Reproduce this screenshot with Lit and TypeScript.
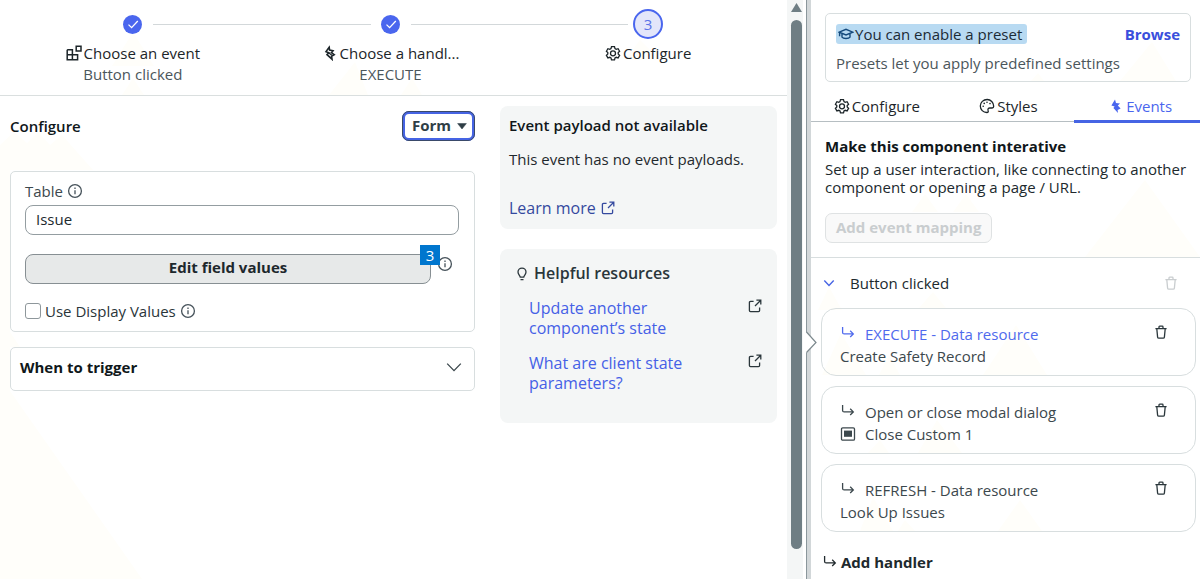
import { LitElement, html, css, svg, nothing } from "lit";
import { customElement, property, state } from "lit/decorators.js";
import { classMap } from "lit/directives/class-map.js";

const glyphs: Record<string, unknown> = {
  check: svg`<path d="M3.500 8.600 6.600 11.600 12.800 5"/>`,
  blocks: svg`<path d="M1.200 4.700h5.200v10M1.200 4.700v10h10.400v-5H1.200M10.200 1.200h4.800v4.800h-4.800z" stroke-width="1.500"/>`,
  bolt: svg`<path d="M7.200 2.200 4 6.600l2.600 1.200L5 9.600l5 4.600-.4-3L12.200 9.600 9.400 7.600 11 5.800 7.600 5z" stroke-width="1.600"/><path d="M6.400 7.500 9.800 10.200" stroke-width="1.200"/>`,
  boltFill: svg`<path d="M7 1.400 3.400 7.400 6.600 8.400 5.400 10 10 15 9.600 12 12.600 10.400 9.800 7.600 12 5.400 8 5z" fill="currentColor" stroke="none"/>`,
  gear: svg`<path d="M6.500 1.700h3l.5 1.900 1.200.7 1.900-.6 1.500 2.600-1.400 1.300v1.400l1.400 1.300-1.500 2.600-1.900-.6-1.200.7-.5 1.900h-3L6 13l-1.200-.7-1.900.6-1.500-2.600L2.800 9V7.600L1.400 6.300l1.500-2.600 1.900.6L6 3.600z"/><circle cx="8" cy="8.300" r="2.500"/>`,
  palette: svg`<path d="M8.200 1.500C4.300 1.500 1.300 4.400 1.300 8s2.900 6.500 6.500 6.500c1.500 0 1.700-1 1.300-2-.5-1.400.3-2.500 1.700-2.500h2.300c1.100 0 1.600-.7 1.600-1.700-.1-3.900-2.900-6.800-6.500-6.800z"/><path d="M4.200 8.200h.01M5.200 5.400h.01M8 4.200h.01M11 5.600h.01" stroke-width="1.600" stroke-linecap="round"/>`,
  cap: svg`<path d="M1.200 6.200 8 3.300l6.800 2.900L8 8.900z M4 7.500v3.700c1.200 1.700 6.800 1.700 8 0V7.500M1.600 6.400v3.800" stroke-width="1.400"/>`,
  info: svg`<circle cx="8" cy="8" r="6.400"/><path d="M8 7.200v4M8 4.600v1.400" stroke-width="1.300"/>`,
  external: svg`<path d="M6.600 3.400H3.500c-.8 0-1.100.3-1.100 1.100v8c0 .8.300 1.100 1.100 1.100h8c.8 0 1.100-.3 1.100-1.100V9.400M9.400 2.200h4.400v4.400M13.500 2.500 8 8" stroke-width="1.300"/>`,
  bulb: svg`<path d="M6.300 11.200C6.300 9.600 4 8.700 4 6.100a4 4 0 0 1 8 0c0 2.600-2.300 3.500-2.300 5.100z M6.500 13.700h3" stroke-width="1.300"/>`,
  chevron: svg`<path d="M1.200 4.600 8 11.600l6.800-7" stroke-width="1.300"/>`,
  smallChevron: svg`<path d="M3.300 5.600 8 10.400l4.700-4.800" stroke-width="1.400"/>`,
  trash: svg`<path d="M2.400 4.600h11.200M3.800 4.800l.8 8.300c.1.800.4 1.100 1.200 1.100h4.400c.8 0 1.100-.3 1.200-1.100l.8-8.300M6 4.400V2.900c0-.5.200-.7.700-.7h2.600c.5 0 .7.200.7.700v1.500" stroke-width="1.300"/>`,
  branch: svg`<path d="M2.600 2v5.400c0 1.100.4 1.500 1.500 1.500h9M10.200 5.800l3.100 3.100-3.100 3.100" stroke-width="1.300"/>`,
  modal: svg`<rect x="1.500" y="1.800" width="13" height="12.400" rx="1.200"/><rect x="4" y="4.600" width="8" height="6.200" fill="currentColor" stroke="none"/>`,
  caret: svg`<path d="M3 5.200h10L8 11.400z" fill="currentColor" stroke="currentColor" stroke-width=".6"/>`,
};

@customElement("ui-icon")
class UiIcon extends LitElement {
  @property() name = "";

  static styles = css`
    :host {
      display: inline-flex;
      flex: none;
      width: 16px;
      height: 16px;
    }
    .glyph {
      width: 100%;
      height: 100%;
      fill: none;
      stroke: currentColor;
      stroke-width: 1.3;
    }
  `;

  render() {
    return html`<svg class="glyph" viewBox="0 0 16 16" aria-hidden="true">${glyphs[this.name] ?? nothing}</svg>`;
  }
}

const shared = css`
  * {
    box-sizing: border-box;
  }
  h2,
  h3,
  p,
  ul,
  ol {
    margin: 0;
    padding: 0;
    list-style: none;
  }
  button,
  input,
  select {
    font: inherit;
    color: inherit;
    margin: 0;
  }
  a {
    text-decoration: none;
  }
`;

interface Step {
  icon: string;
  label: string;
  value?: string;
}

@customElement("step-bar")
class StepBar extends LitElement {
  static styles = [
    shared,
    css`
      :host {
        display: block;
        border-bottom: 1px solid #dadfdf;
      }
      .steps {
        display: grid;
        grid-template-columns: repeat(3, minmax(0, 1fr));
        padding: 9px 10px 10px 4px;
      }
      .track {
        display: flex;
        align-items: center;
        height: 30px;
      }
      .line {
        flex: 1;
        height: 1px;
        background: #d3d8da;
      }
      .line.none {
        background: transparent;
      }
      .slot {
        display: flex;
        justify-content: center;
        width: 40px;
      }
      .marker {
        display: flex;
        align-items: center;
        justify-content: center;
        width: 19px;
        height: 19px;
        border-radius: 50%;
        background: #4a66ee;
        color: #fff;
      }
      .marker.current {
        width: 30px;
        height: 30px;
        border: 2px solid #4a66ee;
        background: #e3e6fa;
        color: #5a73e8;
      }
      .label {
        display: flex;
        align-items: center;
        justify-content: center;
        gap: 2px;
        line-height: 22px;
        padding-top: 3px;
        color: #1c2529;
      }
      .value {
        text-align: center;
        line-height: 21px;
        color: #4b565b;
      }
    `,
  ];

  steps: Step[] = [
    { icon: "blocks", label: "Choose an event", value: "Button clicked" },
    { icon: "bolt", label: "Choose a handl...", value: "EXECUTE" },
    { icon: "gear", label: "Configure" },
  ];

  render() {
    const last = this.steps.length - 1;
    return html`<ol class="steps">
      ${this.steps.map(
        (s, i) => html`<li>
          <div class="track">
            <span class=${classMap({ line: true, none: i === 0 })}></span>
            <span class="slot">
              <span class=${classMap({ marker: true, current: i === last })}
                >${i === last ? i + 1 : html`<ui-icon name="check"></ui-icon>`}</span
              >
            </span>
            <span class=${classMap({ line: true, none: i === last })}></span>
          </div>
          <div class="label"><ui-icon name=${s.icon}></ui-icon>${s.label}</div>
          ${s.value ? html`<div class="value">${s.value}</div>` : nothing}
        </li>`
      )}
    </ol>`;
  }
}

@customElement("config-form")
class ConfigForm extends LitElement {
  @state() private useDisplay = false;

  static styles = [
    shared,
    css`
      :host {
        display: block;
      }
      .head {
        display: flex;
        align-items: center;
        justify-content: space-between;
        height: 30px;
        margin-top: 5px;
      }
      .title {
        font-size: 15px;
        font-weight: 600;
        color: #10171a;
      }
      .mode {
        display: grid;
        align-items: center;
      }
      .mode select,
      .mode ui-icon {
        grid-area: 1 / 1;
      }
      .mode select {
        appearance: none;
        height: 30px;
        padding: 0 20px 2px 7px;
        border: 3px solid #4664e4;
        outline: 1px solid #3a4a6a;
        outline-offset: -1px;
        border-radius: 7px;
        background: #fff;
        font-weight: 700;
        line-height: 20px;
        color: #2f3e46;
      }
      .mode ui-icon {
        justify-self: end;
        width: 14px;
        margin-right: 6px;
        color: #2f3e46;
        pointer-events: none;
      }
      .card {
        border: 1px solid #d8dedf;
        border-radius: 5px;
        background: #fff;
      }
      .fields {
        margin-top: 30px;
        padding: 9px 15px 9px 14px;
      }
      .caption {
        display: flex;
        align-items: center;
        gap: 4px;
        line-height: 20px;
        color: #3c484d;
      }
      ui-icon.info {
        color: #46525a;
      }
      .text {
        display: block;
        width: 100%;
        height: 30px;
        margin-top: 4px;
        padding: 0 10px 2px;
        border: 1px solid #949da1;
        border-radius: 8px;
        background: #fff;
        color: #20292d;
      }
      .action {
        display: flex;
        align-items: center;
        gap: 6px;
        margin-top: 19px;
      }
      .edit-wrap {
        position: relative;
        flex: 1;
      }
      .edit {
        width: 100%;
        height: 30px;
        border: 1px solid #878f93;
        border-radius: 8px;
        background: #e7e9e9;
        font-weight: 700;
        line-height: 20px;
        padding: 0 0 4px;
        color: #1d272c;
      }
      .badge {
        position: absolute;
        top: -9px;
        right: -9px;
        width: 20px;
        height: 20px;
        line-height: 20px;
        text-align: center;
        background: #0076ce;
        color: #fff;
      }
      .action ui-icon {
        margin: 0 6px 10px 0;
      }
      .check {
        display: flex;
        align-items: center;
        gap: 4px;
        margin-top: 16px;
        line-height: 22px;
        color: #2a353a;
      }
      .check input {
        appearance: none;
        width: 16px;
        height: 16px;
        border: 1px solid #8e979b;
        border-radius: 3px;
        background: #fff;
      }
      .check input:checked {
        background: #4a66ee;
      }
      .trigger {
        display: flex;
        align-items: center;
        justify-content: space-between;
        width: 100%;
        height: 44px;
        margin-top: 15px;
        padding: 0 12px 4px 9px;
        font-weight: 700;
        color: #10171a;
      }
      .trigger ui-icon {
        color: #3a464b;
      }
    `,
  ];

  render() {
    return html`
      <div class="head">
        <h2 class="title">Configure</h2>
        <div class="mode">
          <select aria-label="Editing mode">
            <option>Form</option>
          </select>
          <ui-icon name="caret"></ui-icon>
        </div>
      </div>
      <section class="card fields">
        <div class="caption"><label for="table">Table</label><ui-icon class="info" name="info"></ui-icon></div>
        <input id="table" class="text" type="text" .value=${"Issue"} />
        <div class="action">
          <div class="edit-wrap">
            <button class="edit" type="button">Edit field values</button>
            <span class="badge">3</span>
          </div>
          <ui-icon class="info" name="info"></ui-icon>
        </div>
        <div class="check">
          <input
            id="display"
            type="checkbox"
            .checked=${this.useDisplay}
            @change=${(e: Event) => (this.useDisplay = (e.target as HTMLInputElement).checked)}
          />
          <label for="display">Use Display Values</label>
          <ui-icon class="info" name="info"></ui-icon>
        </div>
      </section>
      <button class="card trigger" type="button">When to trigger<ui-icon name="chevron"></ui-icon></button>
    `;
  }
}

@customElement("help-column")
class HelpColumn extends LitElement {
  static styles = [
    shared,
    css`
      :host {
        display: flex;
        flex-direction: column;
        gap: 20px;
      }
      .panel {
        border-radius: 8px;
        background: #f4f6f6;
        color: #1f292d;
      }
      .payload {
        padding: 8px 9px 10px;
      }
      .title {
        font-size: 15px;
        font-weight: 600;
        line-height: 22px;
        color: #10171a;
      }
      .note {
        margin-top: 12px;
        line-height: 22px;
      }
      .more {
        display: flex;
        align-items: center;
        gap: 4px;
        margin-top: 27px;
        font-size: 16px;
        line-height: 22px;
        color: #34499f;
      }
      .resources {
        padding: 13px 14px 30px;
      }
      .heading {
        display: flex;
        align-items: center;
        gap: 4px;
        font-size: 16px;
        font-weight: 600;
        line-height: 22px;
        color: #2a363b;
      }
      .links {
        display: flex;
        flex-direction: column;
        gap: 15px;
        padding: 14px 0 0 15px;
        font-size: 16px;
        line-height: 20px;
      }
      .links li {
        display: flex;
        justify-content: space-between;
      }
      .links a {
        max-width: 170px;
        color: #4560e6;
      }
      .heading ui-icon {
        margin-top: 2px;
      }
      .links ui-icon {
        color: #2a363b;
      }
    `,
  ];

  render() {
    return html`
      <section class="panel payload">
        <h3 class="title">Event payload not available</h3>
        <p class="note">This event has no event payloads.</p>
        <a class="more" href="#learn">Learn more <ui-icon name="external"></ui-icon></a>
      </section>
      <section class="panel resources">
        <h3 class="heading"><ui-icon name="bulb"></ui-icon>Helpful resources</h3>
        <ul class="links">
          <li><a href="#state">Update another component’s state</a><ui-icon name="external"></ui-icon></li>
          <li><a href="#parameters">What are client state parameters?</a><ui-icon name="external"></ui-icon></li>
        </ul>
      </section>
    `;
  }
}

interface Handler {
  name: string;
  detail: string;
  active?: boolean;
  modal?: boolean;
}

@customElement("events-panel")
class EventsPanel extends LitElement {
  static styles = [
    shared,
    css`
      :host {
        display: block;
        overflow: hidden;
      }
      button {
        border: 0;
        padding: 0;
        background: none;
      }
      .preset {
        margin: 13px 9px 0 14px;
        padding: 10px 10px 7px;
        border: 1px solid #d8dedf;
        border-radius: 5px;
      }
      .preset-head {
        display: flex;
        align-items: center;
        justify-content: space-between;
      }
      .pill {
        display: flex;
        align-items: center;
        gap: 1px;
        height: 20px;
        padding: 0 5px 0 2px;
        border-radius: 3px;
        background: #b8daf2;
        color: #1c2b36;
      }
      .pill ui-icon {
        color: #164a7c;
      }
      .browse {
        font-weight: 700;
        line-height: 20px;
        color: #3a4fdc;
      }
      .preset-note {
        margin-top: 8px;
        line-height: 22px;
        color: #4b565b;
      }
      .tabs {
        display: grid;
        grid-template-columns: repeat(3, calc(100% / 3 + 2px));
        height: 40px;
        border-bottom: 1px solid #b6bec2;
      }
      .tab {
        display: flex;
        align-items: center;
        justify-content: center;
        gap: 2px;
        height: 41px;
        padding-top: 9px;
        border-bottom: 3px solid transparent;
        color: #1c2529;
      }
      .tab.on {
        border-color: #4664e4;
        color: #4a66ee;
      }
      .intro {
        padding: 14px 8px 14px 14px;
        border-bottom: 1px solid #d8dedf;
      }
      .title {
        font-size: 15px;
        font-weight: 700;
        line-height: 20px;
        color: #10171a;
      }
      .desc {
        margin-top: 4px;
        line-height: 18px;
        color: #20292d;
      }
      .add-mapping {
        height: 30px;
        margin-top: 17px;
        padding: 0 10px 3px;
        border: 1px solid #dfe2e3;
        border-radius: 7px;
        background: #f9f9f9;
        font-weight: 700;
        color: #c9cdcf;
      }
      .event {
        display: flex;
        align-items: center;
        gap: 13px;
        height: 50px;
        padding: 0 21px 1px 10px;
        color: #20292d;
      }
      .event .toggle {
        display: flex;
        color: #4664e4;
      }
      .event .name {
        flex: 1;
      }
      .event .bin {
        display: flex;
        color: #c9cdcf;
      }
      .handlers {
        display: flex;
        flex-direction: column;
        gap: 10px;
        padding: 0 4px 0 10px;
      }
      .handler {
        display: grid;
        grid-template-columns: 16px 1fr 16px;
        column-gap: 9px;
        align-items: center;
        padding: 14px 26px 8px 18px;
        border: 1px solid #d8dedf;
        border-radius: 15px;
        line-height: 22px;
        color: #3c484d;
      }
      .handler.active .name,
      .handler.active .arrow {
        color: #4f6aed;
      }
      .arrow {
        margin-bottom: 3px;
      }
      .handler .detail {
        grid-column: 1 / -1;
        display: flex;
        align-items: center;
        gap: 9px;
      }
      .handler .bin {
        display: flex;
        margin-bottom: 4px;
        color: #2a363b;
      }
      .add {
        display: flex;
        align-items: center;
        gap: 3px;
        margin: 19px 0 0 11px;
        font-weight: 700;
        line-height: 22px;
        color: #20292d;
      }
    `,
  ];

  handlers: Handler[] = [
    { name: "EXECUTE - Data resource", detail: "Create Safety Record", active: true },
    { name: "Open or close modal dialog", detail: "Close Custom 1", modal: true },
    { name: "REFRESH - Data resource", detail: "Look Up Issues" },
  ];

  tabs = [
    { icon: "gear", label: "Configure" },
    { icon: "palette", label: "Styles" },
    { icon: "boltFill", label: "Events", on: true },
  ];

  render() {
    return html`
      <section class="preset">
        <div class="preset-head">
          <span class="pill"><ui-icon name="cap"></ui-icon>You can enable a preset</span>
          <button class="browse" type="button">Browse</button>
        </div>
        <p class="preset-note">Presets let you apply predefined settings</p>
      </section>
      <div class="tabs" role="tablist">
        ${this.tabs.map(
          (t) => html`<button
            class=${classMap({ tab: true, on: !!t.on })}
            role="tab"
            type="button"
            aria-selected=${t.on ? "true" : "false"}
          >
            <ui-icon name=${t.icon}></ui-icon>${t.label}
          </button>`
        )}
      </div>
      <section class="intro">
        <h2 class="title">Make this component interative</h2>
        <p class="desc">Set up a user interaction, like connecting to another component or opening a page / URL.</p>
        <button class="add-mapping" type="button" disabled>Add event mapping</button>
      </section>
      <div class="event">
        <button class="toggle" type="button" aria-label="Collapse"><ui-icon name="smallChevron"></ui-icon></button>
        <span class="name">Button clicked</span>
        <button class="bin" type="button" aria-label="Delete event" disabled><ui-icon name="trash"></ui-icon></button>
      </div>
      <ul class="handlers">
        ${this.handlers.map(
          (h) => html`<li class=${classMap({ handler: true, active: !!h.active })}>
            <ui-icon class="arrow" name="branch"></ui-icon>
            <span class="name">${h.name}</span>
            <button class="bin" type="button" aria-label="Delete handler"><ui-icon name="trash"></ui-icon></button>
            <span class="detail">${h.modal ? html`<ui-icon name="modal"></ui-icon>` : nothing}${h.detail}</span>
          </li>`
        )}
      </ul>
      <button class="add" type="button"><ui-icon name="branch"></ui-icon>Add handler</button>
    `;
  }
}

@customElement("app-root")
class AppRoot extends LitElement {
  static styles = [
    shared,
    css`
      :host {
        display: block;
        font-family: "Open Sans", "Noto Sans", sans-serif;
        font-size: 15px;
        background: #fff;
      }
      .shell {
        position: relative;
        z-index: 0;
        display: grid;
        grid-template-columns: minmax(0, 1fr) 16px 8px minmax(0, 389px);
        height: 100vh;
        overflow: hidden;
      }
      .backdrop {
        position: absolute;
        inset: 0;
        z-index: -1;
        fill: #fffefa;
      }
      .body {
        display: grid;
        grid-template-columns: minmax(0, 465fr) minmax(0, 277fr);
        align-items: start;
        gap: 25px;
        padding: 10px;
      }
      .scroll {
        display: flex;
        flex-direction: column;
        align-items: center;
        gap: 7px;
        padding: 3px 1px 30px 4px;
        background: #f4f6f6;
      }
      .up {
        width: 11px;
        height: 10px;
        fill: #6f7e84;
      }
      .thumb {
        flex: 1;
        width: 11px;
        border-radius: 6px;
        background: #6f7e84;
      }
      .divider {
        position: relative;
        margin-left: 3px;
        border-left: 1px solid #8b979c;
        background: #d2d7d9;
      }
      .notch {
        position: absolute;
        top: 331px;
        left: -1px;
        width: 12px;
        height: 24px;
      }
    `,
  ];

  render() {
    return html`<div class="shell">
      <svg class="backdrop" width="1200" height="579" aria-hidden="true">
        <path
          d="M133 32 154 66H112zM133 78 144 95H122zM355 62 368 95H329zM412 78 422 95H401zM0 145 14 132 27 143 38 132 50 145 62 135 93 170H10V332L20 347H10V391L142 579H0zM640 40 660 60H625z"
        />
        <path
          d="M1152 42 1176 81H1120zM1038 73 1044 81H1031zM852 154 862 168H842zM925 194 938 212H912zM966 194 979 212H953zM1145 180 1200 257H1085zM829 287 842 310H818zM933 292 946 308H919zM841 333 866 375H822zM889 355 900 375H879zM1016 325 1047 375H983zM880 440 889 453H868zM937 420 962 453H918zM873 497 893 531H860zM1020 500 1042 531H998zM905 520 915 531H898z"
        />
      </svg>
      <main>
        <step-bar></step-bar>
        <div class="body">
          <config-form></config-form>
          <help-column></help-column>
        </div>
      </main>
      <div class="scroll">
        <svg class="up" viewBox="0 0 11 10" aria-hidden="true"><path d="M5.500 0 11 9H0z" /></svg>
        <div class="thumb"></div>
      </div>
      <div class="divider">
        <svg class="notch" viewBox="0 0 12 24" aria-hidden="true">
          <path d="M0 1 10 11.500 0 22z" fill="#fff" />
          <path d="M.5 1 10 11.500.5 21.500" fill="none" stroke="#7d898e" stroke-width="1.200" />
        </svg>
      </div>
      <events-panel></events-panel>
    </div>`;
  }
}
